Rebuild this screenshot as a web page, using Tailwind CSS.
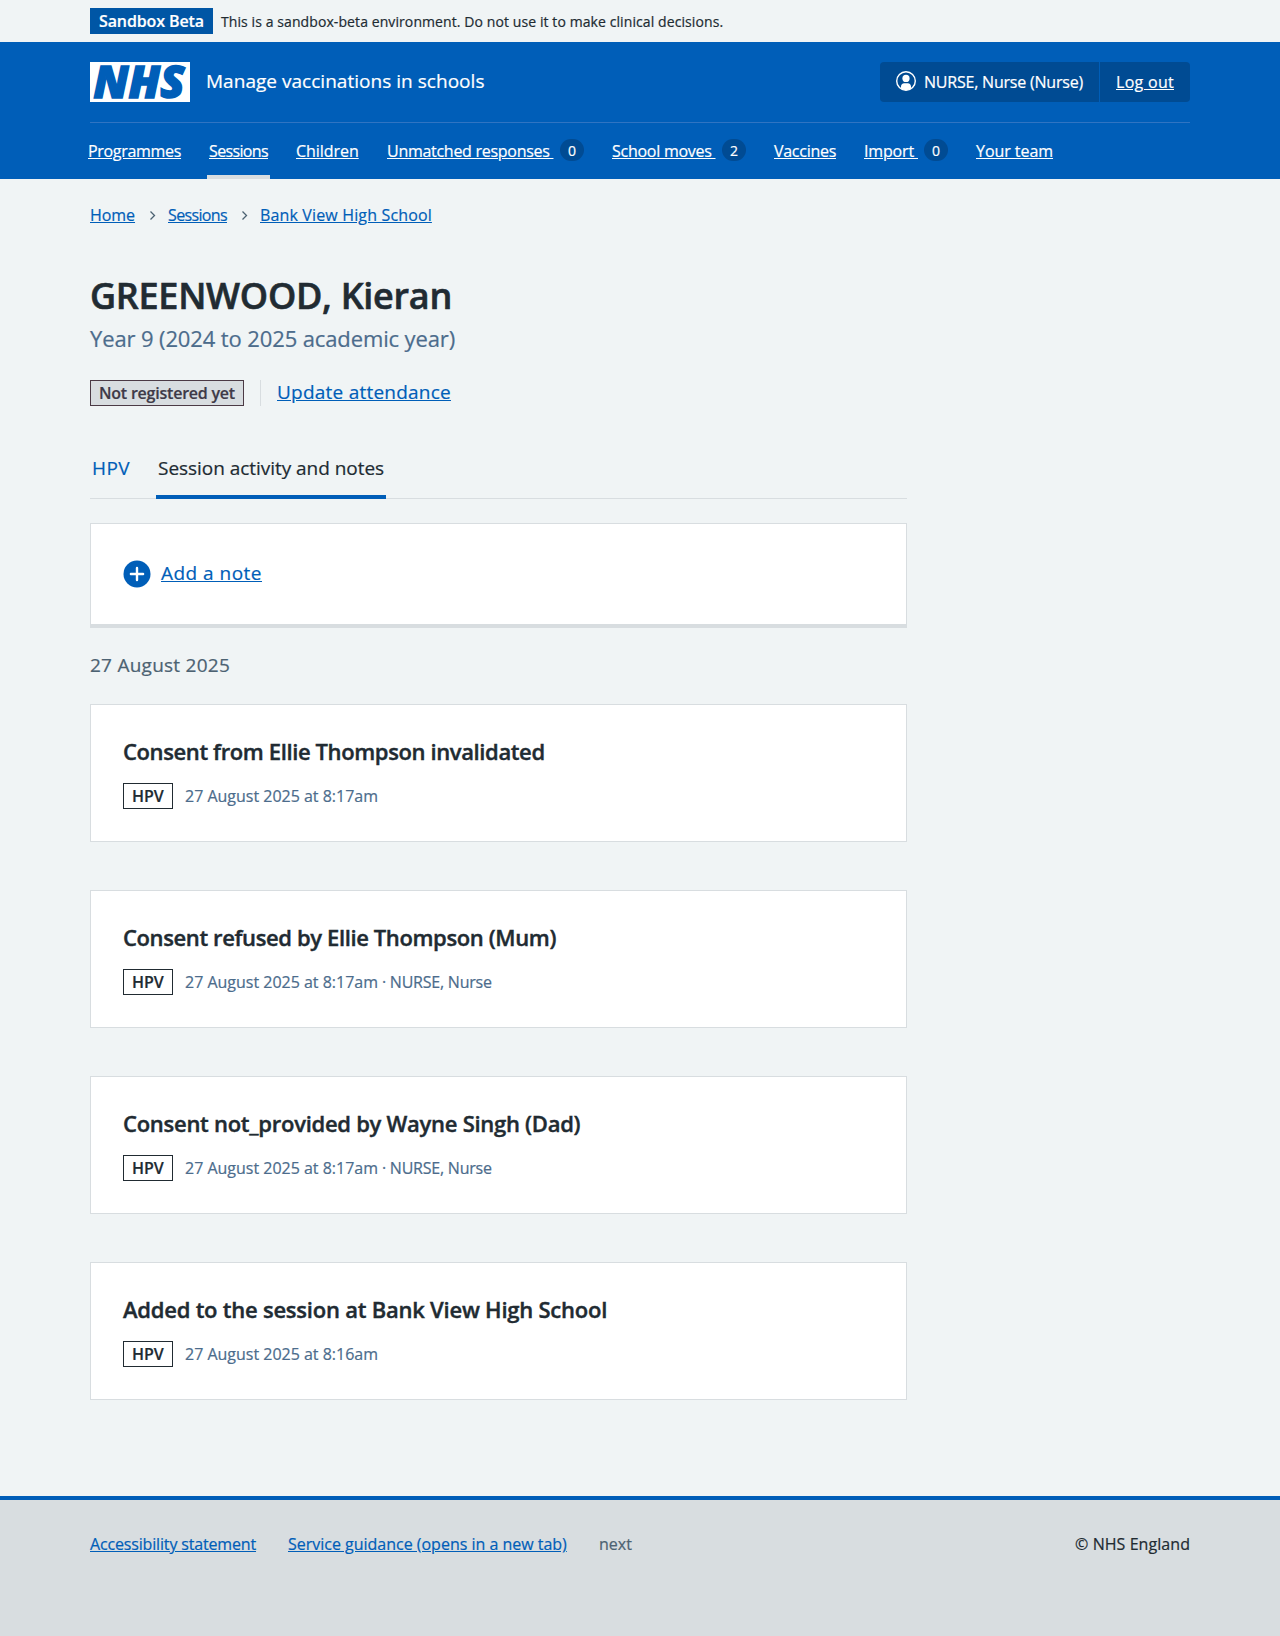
<!DOCTYPE html>
<html lang="en">
<head>
<meta charset="utf-8">
<title>GREENWOOD, Kieran – Manage vaccinations in schools</title>
<script src="https://cdn.jsdelivr.net/npm/@tailwindcss/browser@4"></script>
</head>
<body class="flex min-h-[1636px] w-[1280px] flex-col bg-[#f0f4f5] font-['Open_Sans',sans-serif] text-base leading-6 text-[#212b32] [-webkit-text-stroke:0.2px]">

<!-- Environment banner -->
<div class="flex h-[42px] items-center gap-2 px-[90px] whitespace-nowrap">
  <strong class="h-[26px] w-[123px] border border-[#0056a5] bg-[#0056a5] pl-2 leading-[25px] font-semibold tracking-[-0.11px] text-white">Sandbox Beta</strong>
  <span class="pt-0.5 text-sm tracking-[0.09px]">This is a sandbox-beta environment. Do not use it to make clinical decisions.</span>
</div>

<header class="h-[137px] bg-[#005eb8] px-[90px] whitespace-nowrap text-white">
  <div class="flex h-[81px] items-center border-b border-[#3074c2]">
    <svg class="mr-4 h-10 w-[100px] shrink-0 overflow-visible" viewBox="0 0 100 40" role="img" aria-label="NHS">
      <rect width="100" height="40" fill="#fff"/>
      <text class="[-webkit-text-stroke:0]" x="3.500" y="35.600" textLength="91" lengthAdjust="spacingAndGlyphs" fill="#005eb8" stroke="#005eb8" stroke-width="1.5" font-family="Open Sans" font-weight="800" font-style="italic" font-size="43.500">NHS</text>
    </svg>
    <span class="pb-[3px] text-[19px] leading-7 tracking-[0.03px]">Manage vaccinations in schools</span>
    <div class="ml-auto flex h-10 w-[310px] items-center rounded bg-[#004b93]">
      <div class="flex h-10 w-[220px] items-center border-r border-[#005eb8] pl-4">
        <svg class="mr-2 mb-[2px] h-5 w-5 shrink-0" viewBox="0 0 20 20" fill="none">
          <circle cx="10" cy="10" r="9.3" stroke="#fff" stroke-width="1.4"/>
          <circle cx="10" cy="7.4" r="3.6" fill="#fff"/>
          <path d="M5 17.6v-2.1c0-2 1.3-3.3 3.2-3.3h3.6c1.900 0 3.200 1.300 3.200 3.300v2.100a9.300 9.300 0 0 1-10 0Z" fill="#fff"/>
        </svg>
        <span class="tracking-[-0.21px]">NURSE, Nurse (Nurse)</span>
      </div>
      <a class="ml-4 tracking-[0.29px] underline underline-offset-1">Log out</a>
    </div>
  </div>
  <nav class="-ml-1 flex h-14 items-stretch gap-6">
    <a class="w-[97px] border-b-4 border-transparent px-0.5 pt-4 tracking-[-0.31px] underline underline-offset-1">Programmes</a>
    <a class="w-[63px] border-b-4 border-[#d8dde0] px-0.5 pt-4 tracking-[-0.64px] underline underline-offset-1">Sessions</a>
    <a class="w-[67px] px-0.5 pt-4 tracking-[-0.05px] underline underline-offset-1">Children</a>
    <a class="flex w-[201px] px-0.5 pt-4"><span class="w-[173px] tracking-[-0.28px] whitespace-pre underline underline-offset-1">Unmatched responses </span><span class="h-[22px] w-6 rounded-full bg-[#004b93] text-center text-sm leading-[24px]">0</span></a>
    <a class="flex w-[138px] px-0.5 pt-4"><span class="w-[110px] tracking-[-0.26px] whitespace-pre underline underline-offset-1">School moves </span><span class="h-[22px] w-6 rounded-full bg-[#004b93] text-center text-sm leading-[24px]">2</span></a>
    <a class="w-[66px] px-0.5 pt-4 tracking-[-0.28px] underline underline-offset-1">Vaccines</a>
    <a class="flex w-[88px] px-0.5 pt-4"><span class="w-[60px] tracking-[-0.16px] whitespace-pre underline underline-offset-1">Import </span><span class="h-[22px] w-6 rounded-full bg-[#004b93] text-center text-sm leading-[24px]">0</span></a>
    <a class="px-0.5 pt-4 tracking-[-0.05px] underline underline-offset-1">Your team</a>
  </nav>
</header>

<div class="flex h-[72px] items-center px-[90px] whitespace-nowrap text-[#005eb8]">
  <a class="w-[45px] tracking-[-0.05px] underline underline-offset-1">Home</a>
  <svg class="mx-3 mt-px h-[9px] w-[9px]" viewBox="0 0 9 9" fill="none" stroke="#4c6272" stroke-width="1.3"><path d="M3.500 0.500l4 4-4 4"/></svg>
  <a class="w-[59px] tracking-[-0.64px] underline underline-offset-1">Sessions</a>
  <svg class="mx-3 mt-px h-[9px] w-[9px]" viewBox="0 0 9 9" fill="none" stroke="#4c6272" stroke-width="1.3"><path d="M3.500 0.500l4 4-4 4"/></svg>
  <a class="tracking-[0.15px] underline underline-offset-1">Bank View High School</a>
</div>

<main class="grow px-[90px] whitespace-nowrap">
  <h1 class="mt-[21px] text-[36px] leading-[48px] font-semibold tracking-[-0.28px] [-webkit-text-stroke:0.6px]">GREENWOOD, Kieran</h1>
  <p class="mt-0.5 text-[22px] leading-8 tracking-[-0.12px] text-[#4c6c8c]">Year 9 (2024 to 2025 academic year)</p>

  <div class="mt-[26px] flex h-[26px] items-center">
    <strong class="h-[26px] w-[154px] border border-[#4b3a45] bg-[#d8dde0] pl-2 leading-6 font-semibold tracking-[-0.22px] text-[#3e3a48]">Not registered yet</strong>
    <div class="ml-4 flex h-[26px] items-center border-l border-[#d8dde0] pl-4">
      <a class="mb-0.5 text-[19px] leading-6 tracking-[0.23px] text-[#005eb8] underline underline-offset-1">Update attendance</a>
    </div>
  </div>

  <div class="w-[817px]">
    <div class="mt-[38px] flex h-[55px] gap-6 border-b border-[#d8dde0] text-[19px] leading-7">
      <a class="w-[42px] pt-2.5 pl-0.5 tracking-[0.41px] text-[#005eb8]">HPV</a>
      <a class="h-[55px] w-[230px] border-b-4 border-[#005eb8] pt-2.5 pl-0.5 tracking-[-0.04px]">Session activity and notes</a>
    </div>

    <div class="mt-6 flex h-[105px] items-center border border-b-4 border-[#d8dde0] bg-white pb-px pl-8">
      <svg class="h-7 w-7" viewBox="0 0 28 28"><circle cx="14" cy="14" r="13.500" fill="#005eb8"/><path d="M14 7.900v12.200M7.900 14h12.200" stroke="#fff" stroke-width="2.400" stroke-linecap="round"/></svg>
      <a class="mb-px ml-2.5 text-[19px] leading-7 tracking-[0.48px] text-[#005eb8] underline underline-offset-1">Add a note</a>
    </div>

    <h2 class="mt-[23px] text-[19px] leading-7 tracking-[0.25px] text-[#4c6272]">27 August 2025</h2>

    <div class="mt-[25px] flex flex-col gap-12">
      <section class="h-[138px] border border-[#d8dde0] bg-white px-8 pt-[30px]">
        <h3 class="text-[22px] leading-8 font-semibold tracking-[-0.38px] [-webkit-text-stroke:0.4px]">Consent from Ellie Thompson invalidated</h3>
        <div class="mt-4 flex items-center gap-3">
          <strong class="h-[26px] w-[50px] border border-[#212b32] pl-2 leading-6 font-semibold">HPV</strong>
          <span class="tracking-[-0.01px] text-[#4c6c8c]">27 August 2025 at 8:17am</span>
        </div>
      </section>
      <section class="h-[138px] border border-[#d8dde0] bg-white px-8 pt-[30px]">
        <h3 class="text-[22px] leading-8 font-semibold tracking-[-0.38px] [-webkit-text-stroke:0.4px]">Consent refused by Ellie Thompson (Mum)</h3>
        <div class="mt-4 flex items-center gap-3">
          <strong class="h-[26px] w-[50px] border border-[#212b32] pl-2 leading-6 font-semibold">HPV</strong>
          <span class="text-[#4c6c8c]"><span class="tracking-[-0.01px]">27 August 2025 at 8:17am</span><span class="tracking-[-0.22px]"> · NURSE, Nurse</span></span>
        </div>
      </section>
      <section class="h-[138px] border border-[#d8dde0] bg-white px-8 pt-[30px]">
        <h3 class="text-[22px] leading-8 font-semibold tracking-[-0.27px] [-webkit-text-stroke:0.4px]">Consent not_provided by Wayne Singh (Dad)</h3>
        <div class="mt-4 flex items-center gap-3">
          <strong class="h-[26px] w-[50px] border border-[#212b32] pl-2 leading-6 font-semibold">HPV</strong>
          <span class="text-[#4c6c8c]"><span class="tracking-[-0.01px]">27 August 2025 at 8:17am</span><span class="tracking-[-0.22px]"> · NURSE, Nurse</span></span>
        </div>
      </section>
      <section class="h-[138px] border border-[#d8dde0] bg-white px-8 pt-[30px]">
        <h3 class="text-[22px] leading-8 font-semibold tracking-[-0.23px] [-webkit-text-stroke:0.4px]">Added to the session at Bank View High School</h3>
        <div class="mt-4 flex items-center gap-3">
          <strong class="h-[26px] w-[50px] border border-[#212b32] pl-2 leading-6 font-semibold">HPV</strong>
          <span class="tracking-[-0.01px] text-[#4c6c8c]">27 August 2025 at 8:16am</span>
        </div>
      </section>
    </div>
  </div>
</main>

<footer class="flex h-[140px] items-start border-t-4 border-[#005eb8] bg-[#d8dde0] px-[90px] pt-8 whitespace-nowrap">
  <a class="w-[166px] tracking-[-0.16px] text-[#005eb8] underline underline-offset-1">Accessibility statement</a>
  <a class="ml-8 w-[279px] tracking-[-0.01px] text-[#005eb8] underline underline-offset-1">Service guidance (opens in a new tab)</a>
  <span class="ml-8 text-[#4c6272]">next</span>
  <span class="ml-auto tracking-[0.06px]">© NHS England</span>
</footer>
</body>
</html>
